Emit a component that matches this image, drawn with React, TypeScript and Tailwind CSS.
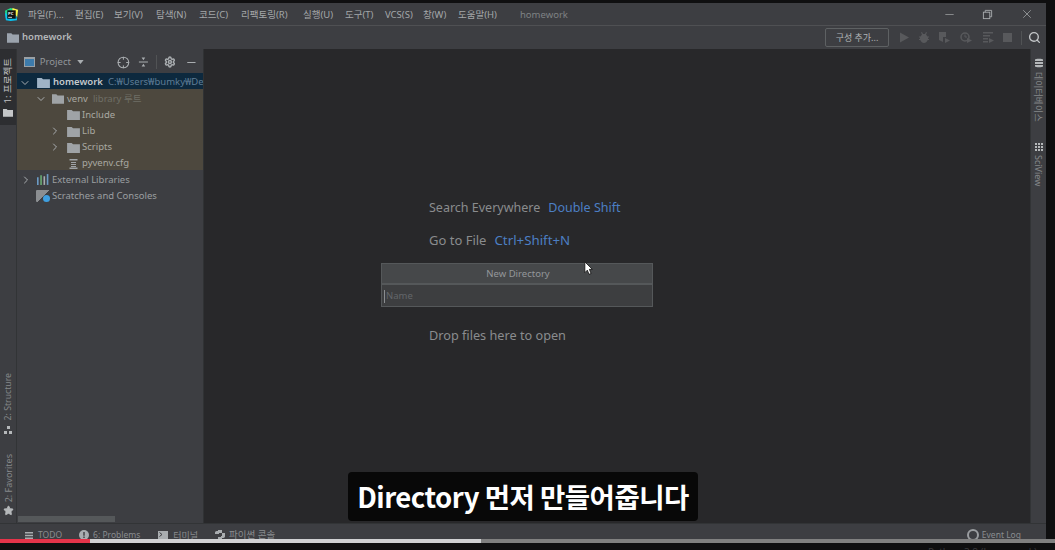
import { ChevronDown, ChevronRight, Minus, Settings, Search, X, Star, Crosshair } from "lucide-react";

const menus = [
    { label: "파일(F)...", width: "w-[47px]" },
    { label: "편집(E)", width: "w-[39px]" },
    { label: "보기(V)", width: "w-[42px]" },
    { label: "탐색(N)", width: "w-[43px]" },
    { label: "코드(C)", width: "w-[42px]" },
    { label: "리팩토링(R)", width: "w-[62px]" },
    { label: "실행(U)", width: "w-[42px]" },
    { label: "도구(T)", width: "w-[40px]" },
    { label: "VCS(S)", width: "w-[38px]" },
    { label: "창(W)", width: "w-[35px]" },
    { label: "도움말(H)", width: "w-[62px]" },
];

function Folder({ className }: { className: string }) {
    return (
        <svg viewBox="0 0 14 12" className={className}>
            <path d="M0 1h5l1.500 1.500H14V12H0z" fill="currentColor" />
        </svg>
    );
}

function Row({ indent, arrow, children, className }: { indent: string; arrow?: "down" | "right"; children: React.ReactNode; className?: string }) {
    return (
        <div className={`flex h-[16.2px] items-center pt-[3px] ${indent} ${className ?? ""}`}>
            <span className="flex w-[15px] shrink-0 text-[#a9adb0]">
                {arrow === "down" && <ChevronDown size={12} strokeWidth={2} />}
                {arrow === "right" && <ChevronRight size={12} strokeWidth={2} />}
            </span>
            {children}
        </div>
    );
}

function App() {
    return (
        <div className="flex h-[550px] w-[1055px] flex-col overflow-hidden bg-[#0f0f10] pt-[3px] font-['Noto_Sans','Noto_Sans_CJK_KR',sans-serif] text-[#a4a7a9]">
            <div className="flex w-[1046px] flex-1 flex-col bg-[#3d3e42]">
                {/* title bar */}
                <div className="flex h-[23px] shrink-0 items-center border-b border-[#4f5053] pl-[4px] pt-[2px] text-[9.5px]">
                    <svg viewBox="0 0 16 16" className="mb-[2px] mr-[9px] h-[15px] w-[15px] shrink-0">
                        <path d="M1 4 7 1l4 1-4 7-5 3z" fill="#21d789" />
                        <path d="M9 1l6 2-1 8-5-6z" fill="#fcf84a" />
                        <path d="M1 6l1 8 5 1 7-1-1-5-7 1z" fill="#07c3f2" />
                        <rect x="3.500" y="3.500" width="9" height="9" fill="#111" />
                        <text x="4.300" y="8" fontSize="4.500" fontWeight="700" fill="#eee">PC</text>
                        <rect x="4.500" y="10.500" width="4" height="1" fill="#ddd" />
                    </svg>
                    {menus.map((m) => (
                        <span key={m.label} className={`${m.width} shrink-0 whitespace-nowrap`}>{m.label}</span>
                    ))}
                    <span className="whitespace-nowrap text-[#7f8284]">homework</span>
                    <div className="mb-[2px] ml-auto flex items-center pr-[12px] text-[#a9acae]">
                        <Minus size={13} strokeWidth={1.25} />
                        <svg viewBox="0 0 12 12" className="ml-[26px] h-[11px] w-[11px]" fill="none" stroke="currentColor">
                            <rect x="1.500" y="3.500" width="7" height="7" />
                            <path d="M3.500 3.500v-2h7v7h-2" />
                        </svg>
                        <X size={14} strokeWidth={1.25} className="ml-[27px]" />
                    </div>
                </div>

                {/* nav bar */}
                <div className="flex h-[23px] shrink-0 items-center pl-[7px] text-[9.5px]">
                    <Folder className="mr-[3px] h-[11px] w-[12px] text-[#9ba3ad]" />
                    <span className="font-semibold text-[#b4b7b9]">homework</span>
                    <div className="ml-auto flex items-center pr-[5px]">
                        <span className="mr-[10px] flex h-[19px] w-[64px] items-center justify-center rounded-[2px] border border-[#5e6163] text-[9px] text-[#b0b3b5]">구성 추가...</span>
                        <svg viewBox="0 0 10 10" className="mr-[10px] h-[11px] w-[10px] text-[#58595c]" fill="currentColor">
                            <path d="M1 0l9 5-9 5z" />
                        </svg>
                        <svg viewBox="0 0 10 11" className="mr-[10px] h-[11px] w-[10px] text-[#58595c]" fill="currentColor">
                            <path d="M3 0l1 2h2l1-2 1 .5L7 2.500 8.500 4.500H10v1H9v1.500h1v1H8.700C8 9.800 6.500 11 5 11S2 9.800 1.300 8H0V7h1V5.500H0v-1h1.500L3 2.500 2 .5z" />
                        </svg>
                        <svg viewBox="0 0 12 11" className="mr-[9px] h-[11px] w-[12px] text-[#58595c]" fill="currentColor">
                            <path d="M0 0h7v5H4v5L0 8zM6 6l5 2.500L6 11z" />
                        </svg>
                        <svg viewBox="0 0 12 11" className="mr-[11px] h-[11px] w-[12px] text-[#58595c]" fill="none" stroke="currentColor">
                            <circle cx="5" cy="5" r="4" strokeWidth="1.500" />
                            <path d="M5 2.500V5h2" />
                            <path d="M7 6l5 2.500L7 11z" fill="currentColor" stroke="none" />
                        </svg>
                        <svg viewBox="0 0 12 11" className="mr-[8px] h-[11px] w-[12px] text-[#58595c]" fill="currentColor">
                            <path d="M0 0h10v1.500H0zM0 3h7v1.500H0zM0 6h5v1.500H0zM0 9h5v1.500H0zM6 6l5 2.500L6 11z" />
                        </svg>
                        <span className="mr-[9px] h-[9px] w-[9px] bg-[#58595c]" />
                        <span className="mr-[6px] h-[14px] w-px bg-[#515355]" />
                        <Search size={13} strokeWidth={2.5} className="text-[#c4c7c9]" />
                    </div>
                </div>

                {/* main */}
                <div className="flex min-h-0 flex-1 border-b border-[#323436]">
                    {/* left strip */}
                    <div className="flex w-[17px] shrink-0 flex-col border-r border-[#323436] text-[9px]">
                        <div className="flex h-[76px] flex-col items-center bg-[#2d2e31] pt-[9px] text-[#c2c4c6]">
                            <span className="rotate-180 whitespace-nowrap text-[9.5px] leading-none [text-orientation:sideways] [writing-mode:vertical-rl]">1: 프로젝트</span>
                            <Folder className="mt-[5px] h-[9px] w-[10px] text-[#c4c6c8]" />
                        </div>
                        <div className="mt-auto flex flex-col items-center pb-[7px] text-[#85888a]">
                            <span className="rotate-180 whitespace-nowrap text-[8.7px] leading-none [text-orientation:sideways] [writing-mode:vertical-rl]">2: Structure</span>
                            <svg viewBox="0 0 8 8" className="mt-[5px] h-[8px] w-[8px] text-[#b5b8ba]">
                                <path d="M3 0h3v3H3zM0 5h3v3H0zM5 5h3v3H5z" fill="currentColor" />
                            </svg>
                            <span className="mt-[20px] rotate-180 whitespace-nowrap leading-none [text-orientation:sideways] [writing-mode:vertical-rl]">2: Favorites</span>
                            <Star size={11} className="mt-[3px] fill-[#b5b8ba] text-[#b5b8ba]" />
                        </div>
                    </div>

                    {/* project panel */}
                    <div className="flex w-[186px] shrink-0 flex-col text-[9.5px]">
                        <div className="flex h-[24px] shrink-0 items-center pl-[7px] pr-[5px] pt-[2px]">
                            <span className="mr-[5px] h-[10px] w-[11px] border border-t-2 border-[#9aa0a5] bg-[#3d7bab]" />
                            <span className="text-[#92969a]">Project</span>
                            <svg viewBox="0 0 8 5" className="ml-[6px] h-[4px] w-[7px] text-[#a9adb0]"><path d="M0 0h8L4 5z" fill="currentColor" /></svg>
                            <Crosshair size={13} strokeWidth={2} className="ml-[33px] text-[#a9adb0]" />
                            <svg viewBox="0 0 12 12" className="ml-[8px] h-[12px] w-[11px] text-[#a9adb0]" fill="currentColor">
                                <path d="M1 5.500h10v1H1zM4 1h4L6 4zM4 11h4L6 8z" />
                            </svg>
                            <span className="ml-[8px] h-[14px] w-px bg-[#515355]" />
                            <Settings size={12} strokeWidth={3} className="ml-[7px] text-[#a9adb0]" />
                            <Minus size={13} strokeWidth={2} className="ml-[9px] text-[#a9adb0]" />
                        </div>
                        <div className="flex-1 overflow-hidden">
                            <Row indent="pl-[2px]" arrow="down" className="bg-[#0d293e] font-semibold">
                                <Folder className="ml-[3px] mr-[3px] h-[11px] w-[13px] shrink-0 text-[#9fb3c6]" />
                                <span className="mr-[5px] text-[#c4c8cc]">homework</span>
                                <span className="whitespace-nowrap font-normal text-[#5f7d96]">C:₩Users₩bumky₩De</span>
                            </Row>
                            <div className="bg-[#4d483e]">
                                <Row indent="pl-[18px]" arrow="down">
                                    <Folder className="ml-[2px] mr-[3px] h-[11px] w-[12px] shrink-0 text-[#9fa3a6]" />
                                    <span className="mr-[5px] text-[#a9a9a2]">venv</span>
                                    <span className="text-[#6f6f66]">library 루트</span>
                                </Row>
                                <Row indent="pl-[32px]">
                                    <Folder className="ml-[3px] mr-[2px] h-[11px] w-[13px] shrink-0 text-[#9fa3a6]" />
                                    <span className="text-[#a9a9a2]">Include</span>
                                </Row>
                                <Row indent="pl-[32px]" arrow="right">
                                    <Folder className="ml-[3px] mr-[2px] h-[11px] w-[13px] shrink-0 text-[#9fa3a6]" />
                                    <span className="text-[#a9a9a2]">Lib</span>
                                </Row>
                                <Row indent="pl-[32px]" arrow="right">
                                    <Folder className="ml-[3px] mr-[2px] h-[11px] w-[13px] shrink-0 text-[#9fa3a6]" />
                                    <span className="text-[#a9a9a2]">Scripts</span>
                                </Row>
                                <Row indent="pl-[32px]">
                                    <svg viewBox="0 0 10 10" className="ml-[3px] mr-[2px] h-[10px] w-[13px] shrink-0 text-[#9fa3a6]" fill="currentColor">
                                        <path d="M1 0h8v1.500H1zM2.500 3h5v1h-5zM2.500 5h5v1h-5zM2.500 7h5v1h-5zM1 8.500h8V10H1z" />
                                    </svg>
                                    <span className="text-[#a9a9a2]">pyvenv.cfg</span>
                                </Row>
                            </div>
                            <Row indent="pl-[3px]" arrow="right">
                                <svg viewBox="0 0 12 10" className="ml-[2px] mr-[2px] h-[11px] w-[13px] shrink-0">
                                    <path d="M0 3h1.500v7H0z" fill="#6b9ac4" />
                                    <path d="M3 1h1.500v9H3z" fill="#6aab73" />
                                    <path d="M6 2h1.500v8H6z" fill="#a9adb0" />
                                    <path d="M9 0h1.500v10H9z" fill="#6b9ac4" />
                                </svg>
                                <span className="text-[#9b9ea1]">External Libraries</span>
                            </Row>
                            <Row indent="pl-[5px]">
                                <span className="ml-[-1px] mr-[2px] flex h-[12px] w-[14px] shrink-0 items-end justify-end rounded-[1px] bg-[linear-gradient(135deg,#8b8e91_50%,transparent_50%)]">
                                    <span className="h-[7px] w-[7px] rounded-full bg-[#3f9fe0]" />
                                </span>
                                <span className="text-[#9b9ea1]">Scratches and Consoles</span>
                            </Row>
                        </div>
                        <div className="mb-[1px] ml-[1px] h-[6px] w-[97px] bg-[#55585a]" />
                    </div>

                    {/* editor */}
                    <div className="relative flex min-w-0 flex-1 flex-col border-l border-[#303234] bg-[#28282a]">
                        <div className="ml-[225px] mt-[149px] flex flex-col text-[12.5px] leading-[20px] text-[#8a8c8e]">
                            <div className="mb-[12px] whitespace-nowrap">Search Everywhere<span className="ml-[8px] text-[#4c7fc4]">Double Shift</span></div>
                            <div className="mb-[12px] whitespace-nowrap text-[13px]">Go to File<span className="ml-[8px] text-[13.3px] text-[#4c7fc4]">Ctrl+Shift+N</span></div>
                            <div className="mb-[11px] h-[20px]" />
                            <div className="mb-[12px] h-[20px]" />
                            <div className="whitespace-nowrap text-[12.7px]">Drop files here to open</div>
                        </div>

                        {/* new directory popup */}
                        <div className="absolute left-[177px] top-[214px] flex h-[44px] w-[272px] flex-col border border-[#55585a] bg-[#3d3e40]">
                            <div className="flex h-[21px] shrink-0 items-center justify-center border-b-2 border-[#55585a] bg-[#46484a] pl-[2px] pt-[1px] text-[9.5px] text-[#94979a]">New Directory</div>
                            <div className="flex flex-1 items-center pl-[2px] pt-[1px] text-[9.5px] text-[#63666a]">
                                <span className="mr-[1px] h-[13px] w-px bg-[#8a8d90]" />
                                Name
                            </div>
                        </div>

                        {/* mouse cursor */}
                        <svg viewBox="0 0 12 18" className="absolute left-[380px] top-[212px] h-[15px] w-[10px]">
                            <path d="M1 1v13l3-3 2 5 2.500-1-2-5H10z" fill="#fff" stroke="#111" strokeWidth="1" />
                        </svg>

                        {/* caption */}
                        <div className="absolute left-[144px] top-[423px] flex h-[49px] w-[350px] items-center justify-center rounded-[4px] bg-[#080808] font-['Noto_Sans_CJK_KR',sans-serif] text-[27.5px] font-bold tracking-[-0.5px] text-white">
                            Directory 먼저 만들어줍니다
                        </div>
                    </div>

                    {/* right strip */}
                    <div className="flex w-[16px] shrink-0 flex-col items-center border-l border-[#323436] pt-[9px] text-[9px] text-[#85888a]">
                        <svg viewBox="0 0 8 10" className="h-[10px] w-[8px] text-[#b5b8ba]" fill="currentColor">
                            <path d="M0 1.500C0 .5 8 .5 8 1.500V3H0zM0 4h8v2H0zM0 7h8v1.500c0 1-8 1-8 0z" />
                        </svg>
                        <span className="mt-[4px] whitespace-nowrap leading-none [text-orientation:sideways] [writing-mode:vertical-rl]">데이터베이스</span>
                        <svg viewBox="0 0 8 8" className="mt-[21px] h-[8px] w-[8px] text-[#b5b8ba]" fill="currentColor">
                            <path d="M0 0h2v2H0zM3 0h2v2H3zM6 0h2v2H6zM0 3h2v2H0zM3 3h2v2H3zM6 3h2v2H6zM0 6h2v2H0zM3 6h2v2H3zM6 6h2v2H6z" />
                        </svg>
                        <span className="mt-[4px] whitespace-nowrap leading-none [text-orientation:sideways] [writing-mode:vertical-rl]">SciView</span>
                    </div>
                </div>

                {/* status bar, its lower edge is cut by the video progress bar */}
                <div className="flex h-[15px] shrink-0 items-center overflow-hidden pl-[25px] pr-[25px] pt-[7px] text-[8.5px] leading-none text-[#8a8d90]">
                    <svg viewBox="0 0 8 7" className="mr-[5px] h-[7px] w-[8px] text-[#a9adb0]" fill="currentColor">
                        <path d="M0 0h8v1.500H0zM0 2.700h8v1.500H0zM0 5.400h8V7H0z" />
                    </svg>
                    <span className="mr-[17px]">TODO</span>
                    <svg viewBox="0 0 10 10" className="mr-[4px] h-[10px] w-[10px]">
                        <circle cx="5" cy="5" r="5" fill="#a9adb0" />
                        <path d="M4.300 2h1.400v3.700H4.300zM4.300 6.500h1.400v1.400H4.300z" fill="#3d3e42" />
                    </svg>
                    <span className="mr-[18px]">6: Problems</span>
                    <svg viewBox="0 0 10 9" className="mr-[5px] h-[9px] w-[10px]">
                        <path d="M0 0h10v9H0z" fill="#a9adb0" />
                        <path d="M1.500 1.500 4 3.500 1.500 5.500" fill="none" stroke="#3d3e42" />
                    </svg>
                    <span className="mr-[17px] text-[9px]">터미널</span>
                    <svg viewBox="0 0 10 10" className="mr-[4px] h-[10px] w-[10px]" fill="#a9adb0">
                        <path d="M3 0h4v3H4v1H0V2.500C0 1 1.500 1 3 1zM7 3h3v3.500C10 8 8.500 8 7 8v2H3V7h3V6h1z" />
                    </svg>
                    <span className="text-[9.5px]">파이썬 콘솔</span>
                    <span className="ml-auto mr-[3px] h-[12px] w-[12px] rounded-full border-2 border-[#9a9da0]" />
                    <span>Event Log</span>
                </div>
            </div>

            {/* video progress */}
            <div className="flex h-[4px] w-[1055px] shrink-0 bg-[#808080]">
                <div className="w-[90px] bg-[#e5344a]" />
                <div className="w-[391px] bg-[#d0d1d3]" />
            </div>
            <div className="flex h-[7px] shrink-0 justify-end overflow-hidden pr-[18px] pt-[4px] text-[10px] leading-none text-[#3a3a3c]">
                <span>Python 3.8 (homework)</span>
            </div>
        </div>
    );
}

export default App;
